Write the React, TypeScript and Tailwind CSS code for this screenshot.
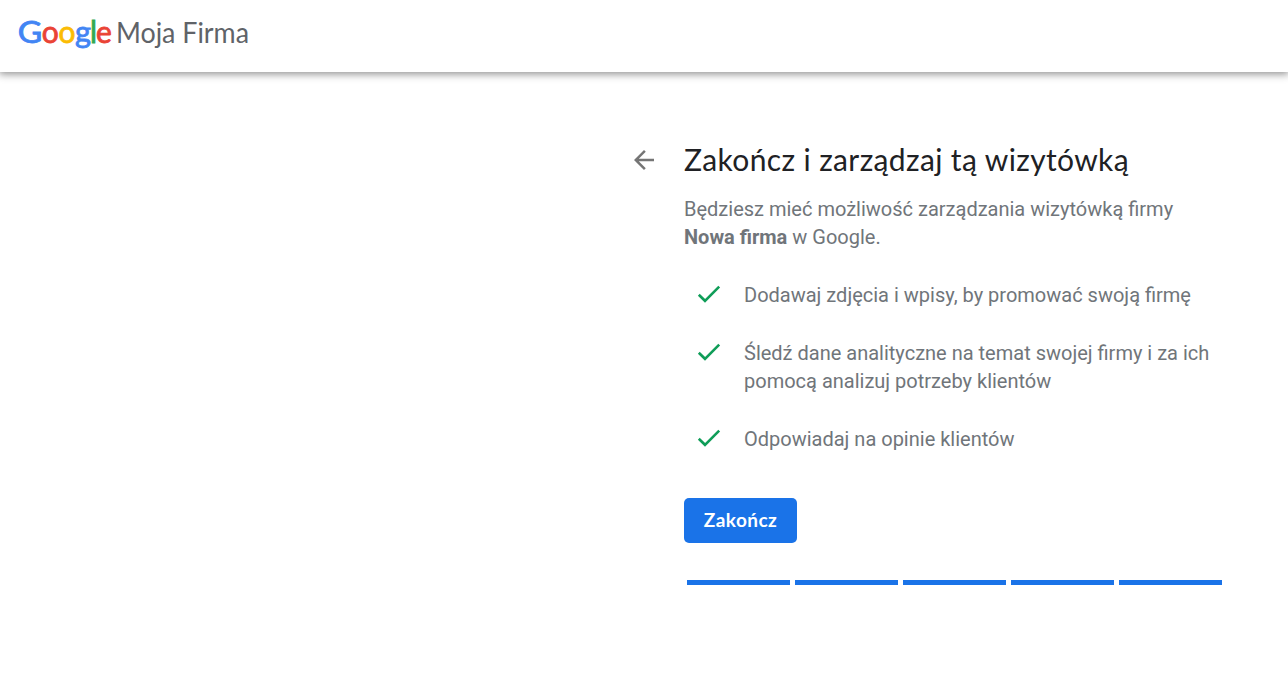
const LOGO_LETTERS = [
  { char: 'G', x: 17.8, width: 24.5, size: 30.5, color: '#4285f4' },
  { char: 'o', x: 41.8, width: 17, size: 30, color: '#ea4335' },
  { char: 'o', x: 58.6, width: 17, size: 30, color: '#fbbc04' },
  { char: 'g', x: 75, width: 16, size: 31, color: '#4285f4' },
  { char: 'l', x: 90, width: 7, size: 30, color: '#34a853' },
  { char: 'e', x: 96, width: 15.8, size: 30, color: '#ea4335' },
]

const BENEFITS = [
  'Dodawaj zdjęcia i wpisy, by promować swoją firmę',
  'Śledź dane analityczne na temat swojej firmy i za ich pomocą analizuj potrzeby klientów',
  'Odpowiadaj na opinie klientów',
]

const STEPS = [1, 2, 3, 4, 5]

function Logo() {
  return (
    <svg className="block h-[72px] w-[260px]" viewBox="0 0 260 72" role="img" aria-label="Google Moja Firma">
      <g fontFamily="Lato, sans-serif" strokeWidth="0.8">
        {LOGO_LETTERS.map(letter => (
          <text
            key={letter.x}
            x={letter.x}
            y="42.7"
            fill={letter.color}
            stroke={letter.color}
            fontSize={letter.size}
            textLength={letter.width}
            lengthAdjust="spacingAndGlyphs"
          >
            {letter.char}
          </text>
        ))}
      </g>
      <text x="116" y="43" fill="#5f6368" fontFamily="Lato, sans-serif" fontSize="28" textLength="133" lengthAdjust="spacingAndGlyphs">
        Moja Firma
      </text>
    </svg>
  )
}

function CheckIcon() {
  return (
    <svg className="h-7 w-6 shrink-0" viewBox="0 0 24 28" fill="none" stroke="#0f9d58" strokeWidth="2.6">
      <path d="M1.8 13.7 8 19.8 22.2 5.7" />
    </svg>
  )
}

function BackIcon() {
  return (
    <svg className="block h-5 w-5" viewBox="0 0 20 20" fill="#757575">
      <path d="M20 8.75H4.79l6.98-6.98L10 0 0 10l10 10 1.76-1.76-6.97-6.99H20z" />
    </svg>
  )
}

export default function App() {
  return (
    <div className="min-h-[676px] bg-white font-['Roboto',sans-serif] text-xl leading-7 text-[#70757a]">
      <header className="h-[72px] shadow-[0_1px_8px_1px_rgba(0,0,0,0.45)]">
        <Logo />
      </header>

      <main className="ml-[634px] flex pt-[67px]">
        <button className="mt-[11px] mr-[30px] h-5 w-5 shrink-0" aria-label="Wstecz">
          <BackIcon />
        </button>

        <div className="w-[540px]">
          <h1 className="font-['Lato',sans-serif] text-[30px] leading-10 tracking-[0.37px] whitespace-nowrap text-[#202124]">
            Zakończ i zarządzaj tą wizytówką
          </h1>
          <p className="mt-4">
            Będziesz mieć możliwość zarządzania wizytówką firmy <b className="font-bold">Nowa firma</b> w Google.
          </p>

          <ul className="mt-[30px] flex flex-col gap-[30px]">
            {BENEFITS.map(benefit => (
              <li key={benefit} className="flex pl-[13px]">
                <CheckIcon />
                <span className="ml-[23px] w-[480px]">{benefit}</span>
              </li>
            ))}
          </ul>

          <button className="mt-[45px] block h-[45px] w-[113px] rounded-[5px] bg-[#1a73e8] pb-0.5 font-['Lato',sans-serif] text-[19px] font-bold tracking-[0.45px] text-white">
            Zakończ
          </button>

          {/* Step progress */}
          <div className="mt-[37px] ml-[3px] flex gap-[5px]">
            {STEPS.map(step => (
              <div key={step} className="h-[5px] w-[103px] bg-[#1a73e8]" />
            ))}
          </div>
        </div>
      </main>
    </div>
  )
}
